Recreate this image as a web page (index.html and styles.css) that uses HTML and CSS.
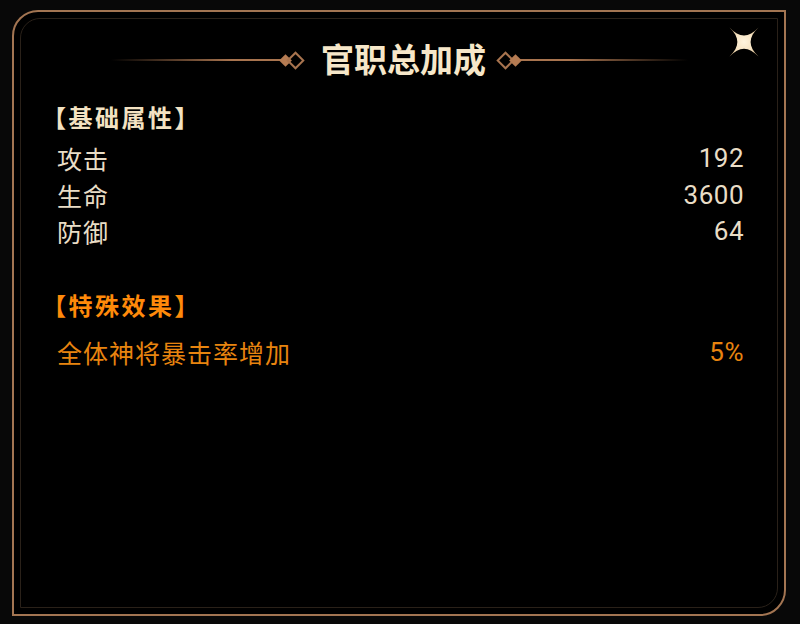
FILE: index.html
```html
<!DOCTYPE html>
<html lang="zh">
<head>
<meta charset="utf-8">
<link rel="stylesheet" href="styles.css">
</head>
<body>
<div class="frame">
  <div class="inner">
    <div class="title-row">
      <span class="line line-left"></span>
      <span class="orn orn-left"><i class="dot"></i><i class="hollow"></i></span>
      <h1 class="title">官职总加成</h1>
      <span class="orn orn-right"><i class="hollow"></i><i class="dot"></i></span>
      <span class="line line-right"></span>
    </div>
    <div class="close" role="button" aria-label="关闭">
      <svg width="30" height="30" viewBox="0 0 30 30">
        <defs>
          <radialGradient id="g" cx="50%" cy="50%" r="60%">
            <stop offset="0" stop-color="#fff4de"/>
            <stop offset="0.6" stop-color="#f6e2c0"/>
            <stop offset="1" stop-color="#d8b888"/>
          </radialGradient>
        </defs>
        <path d="M0.5 0.5 C10.5 11 19.5 11 29.5 0.5 C19 10.5 19 19.5 29.5 29.5 C19.5 19 10.5 19 0.5 29.5 C11 19.5 11 10.5 0.5 0.5 Z" fill="url(#g)"/>
      </svg>
    </div>
    <div class="section basic">
      <div class="sec-head">【基础属性】</div>
      <div class="rows">
        <div class="row"><span>攻击</span><span class="num">192</span></div>
        <div class="row"><span>生命</span><span class="num">3600</span></div>
        <div class="row"><span>防御</span><span class="num">64</span></div>
      </div>
    </div>
    <div class="section special">
      <div class="sec-head">【特殊效果】</div>
      <div class="rows">
        <div class="row"><span>全体神将暴击率增加</span><span class="num">5%</span></div>
      </div>
    </div>
  </div>
</div>
</body>
</html>
```
FILE: styles.css
```css
* { box-sizing: border-box; }
html, body { margin: 0; padding: 0; }
body {
  width: 800px;
  height: 624px;
  background: #080808;
  overflow: hidden;
  font-family: "Noto Sans CJK SC", "Noto Sans", sans-serif;
  padding: 10px 0 0 12px;
}
.frame {
  width: 774px;
  height: 606px;
  border: 2px solid #a37552;
  border-radius: 26px 0 26px 0;
  background: #000;
  padding: 6px;
}
.inner {
  position: relative;
  height: 100%;
  border: 1px solid #2a2119;
  border-radius: 20px 0 20px 0;
  padding: 19px 34px 0 36px;
  display: flex;
  flex-direction: column;
}
.title-row {
  display: flex;
  align-items: center;
  height: 44px;
  margin: 0 -34px 0 -36px;
}
.line {
  height: 2px;
  flex: 0 0 auto;
}
.line-left {
  margin-left: 90px;
  width: 172px;
  background: linear-gradient(to right, rgba(166,116,80,0), #a8744f 70%);
}
.line-right {
  width: 170px;
  background: linear-gradient(to left, rgba(166,116,80,0), #a8744f 70%);
}
.orn {
  display: flex;
  align-items: center;
  height: 24px;
}
.orn i { display: block; transform: rotate(45deg); flex: 0 0 auto; }
.dot {
  width: 9px;
  height: 9px;
  background: #b57b52;
}
.hollow {
  width: 13px;
  height: 13px;
  border: 2px solid #a8744f;
}
.orn-left .dot { margin-left: -2px; }
.orn-left .hollow { margin-left: -1px; }
.orn-right .hollow { margin-right: -1px; }
.orn-right .dot { margin-right: -2px; }
.title {
  margin: 0 13px 0 19px;
  font-size: 33px;
  font-weight: 700;
  line-height: 44px;
  color: #f6e7c9;
  position: relative;
  top: -2px;
}
.close {
  position: absolute;
  top: 8px;
  right: 18px;
  width: 30px;
  height: 30px;
}
.close svg { display: block; }
.section { display: flex; flex-direction: column; }
.sec-head {
  font-size: 24px;
  font-weight: 700;
  line-height: 36px;
  letter-spacing: 2.5px;
  margin-left: -15px;
}
.basic { margin-top: 17px; }
.basic .sec-head { color: #f3e2c2; }
.basic .rows { margin-top: 5px; }
.row {
  display: flex;
  justify-content: space-between;
  align-items: center;
  height: 36.5px;
  font-size: 25px;
  letter-spacing: 1px;
  color: #e9ddc6;
}
.num {
  font-family: Roboto, "Noto Sans", sans-serif;
  font-size: 26px;
  letter-spacing: 0.5px;
  margin-right: -1px;
}
.special { margin-top: 37px; }
.special .sec-head { color: #ff8a0a; }
.special .rows { margin-top: 11px; }
.special .row { color: #e8840f; }
```
